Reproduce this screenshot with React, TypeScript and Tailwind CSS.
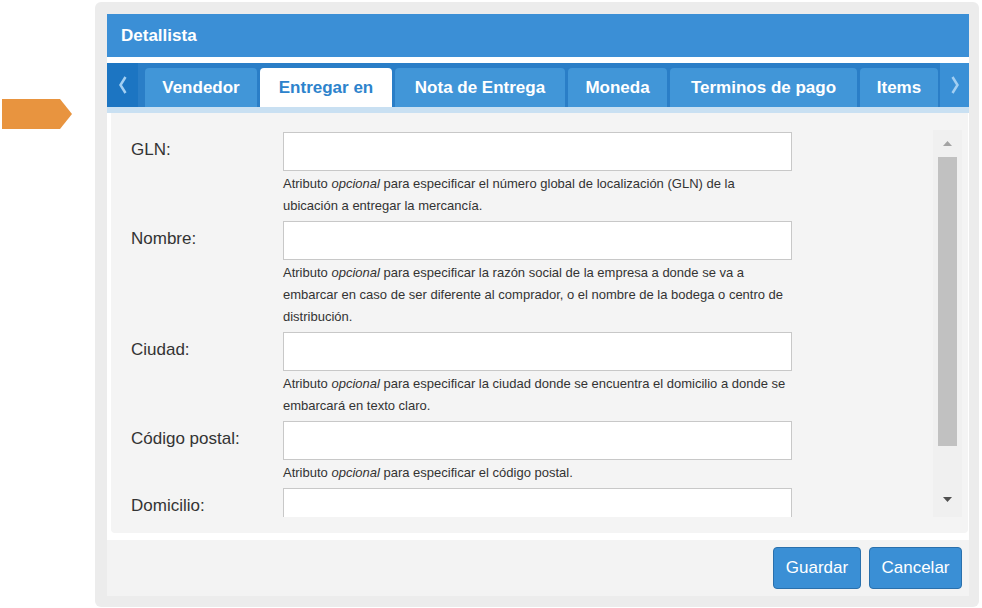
import React from "react";

const tabs = [
  { label: "Vendedor", w: "w-[112px]" },
  { label: "Entregar en", w: "w-[132px]", active: true },
  { label: "Nota de Entrega", w: "w-[170px]" },
  { label: "Moneda", w: "w-[99px]" },
  { label: "Terminos de pago", w: "w-[187px]" },
  { label: "Items", w: "w-[78px]" },
];

function Help({ lines }: { lines: string[] }) {
  return (
    <div className="mt-[2px] mb-[4px] text-[13px] leading-[22px] text-[#333] whitespace-nowrap">
      {lines.map((l, i) => {
        if (i === 0) {
          const rest = l.replace("Atributo opcional", "");
          return (
            <div key={i}>
              Atributo <i>opcional</i>
              {rest}
            </div>
          );
        }
        return <div key={i}>{l}</div>;
      })}
    </div>
  );
}

function Field({ label, help }: { label: string; help?: string[] }) {
  return (
    <div className="flex">
      <div className="w-[152px] shrink-0 text-[17px] leading-[36px] text-[#333]">{label}</div>
      <div className="w-[509px] shrink-0">
        <div className="h-[39px] bg-white border border-[#c8c8c8]" />
        {help && <Help lines={help} />}
      </div>
    </div>
  );
}

export default function App() {
  return (
    <div
      className="w-[982px] h-[608px] bg-white flex overflow-hidden"
      style={{ fontFamily: '"Liberation Sans", Arial, sans-serif' }}
    >
      <div className="w-[95px] shrink-0 pt-[99px]">
        <svg width="74" height="31" viewBox="0 0 74 31">
          <polygon points="2,0 60,0 72,15 60,30 2,30" fill="#e8943f" />
        </svg>
      </div>
      <div className="mt-[2px] w-[884px] h-[605px] bg-[#ececec] rounded-[6px] pl-[12px] pr-[10px] pt-[12px] pb-[11px] flex flex-col">
        <div className="bg-white flex flex-col h-full">
          <div className="h-[43px] bg-[#3b8fd6] flex items-center pl-[14px] text-white font-bold text-[17px]">
            Detallista
          </div>
          <div className="h-[6px] bg-white" />
          <div className="h-[44px] bg-[#2a7ec7] flex">
            <div className="w-[31px] bg-[#1c75c2] flex items-center justify-center">
              <svg width="10" height="18" viewBox="0 0 10 18">
                <polyline points="7.5,1 2.5,9 7.5,17" fill="none" stroke="#a3cff2" strokeWidth="2.5" />
              </svg>
            </div>
            <div className="w-[7px]" />
            <div className="flex items-end gap-[3px]">
              {tabs.map((t) => (
                <div
                  key={t.label}
                  className={`${t.w} h-[39px] rounded-t-[4px] flex items-center justify-center font-bold text-[17px] ${
                    t.active ? "bg-white text-[#2d83cc]" : "bg-[#4196d8] text-white"
                  }`}
                >
                  {t.label}
                </div>
              ))}
            </div>
            <div className="ml-[2px] flex-1 bg-[#3a90d6] flex items-center justify-center">
              <svg width="10" height="18" viewBox="0 0 10 18">
                <polyline points="2.5,1 7.5,9 2.5,17" fill="none" stroke="#a3cff2" strokeWidth="2.5" />
              </svg>
            </div>
          </div>
          <div className="h-[6px] bg-[#c9e0f2]" />
          <div className="h-[420px] ml-[4px] mr-[1px] bg-[#f4f4f4] rounded-b-[4px] pt-[17px] pb-[16px] flex">
            <div className="flex-1 h-[387px] overflow-hidden pl-[20px] pt-[2px]">
              <Field
                label="GLN:"
                help={[
                  "Atributo opcional para especificar el número global de localización (GLN) de la",
                  "ubicación a entregar la mercancía.",
                ]}
              />
              <Field
                label="Nombre:"
                help={[
                  "Atributo opcional para especificar la razón social de la empresa a donde se va a",
                  "embarcar en caso de ser diferente al comprador, o el nombre de la bodega o centro de",
                  "distribución.",
                ]}
              />
              <Field
                label="Ciudad:"
                help={[
                  "Atributo opcional para especificar la ciudad donde se encuentra el domicilio a donde se",
                  "embarcará en texto claro.",
                ]}
              />
              <Field
                label="Código postal:"
                help={["Atributo opcional para especificar el código postal."]}
              />
              <Field label="Domicilio:" />
            </div>
            <div className="w-[29px] h-[387px] bg-[#f0f0f0] mr-[6px] flex flex-col items-center">
              <div className="h-[27px] flex items-center justify-center">
                <svg width="9" height="5" viewBox="0 0 9 5">
                  <polygon points="0,5 4.5,0 9,5" fill="#a3a3a3" />
                </svg>
              </div>
              <div className="w-[19px] h-[289px] bg-[#c1c1c1]" />
              <div className="flex-1 flex items-end justify-center pb-[15px]">
                <svg width="9" height="5" viewBox="0 0 9 5">
                  <polygon points="0,0 4.5,5 9,0" fill="#505050" />
                </svg>
              </div>
            </div>
          </div>
          <div className="h-[7px] bg-white" />
          <div className="flex-1 bg-[#f3f3f3] flex items-center justify-end gap-[8px] pr-[7px]">
            <button className="w-[88px] h-[42px] rounded-[4px] bg-[#3a8fd5] border border-[#2a70ac] text-white text-[17px]">
              Guardar
            </button>
            <button className="w-[93px] h-[42px] rounded-[4px] bg-[#3a8fd5] border border-[#2a70ac] text-white text-[17px]">
              Cancelar
            </button>
          </div>
        </div>
      </div>
    </div>
  );
}
